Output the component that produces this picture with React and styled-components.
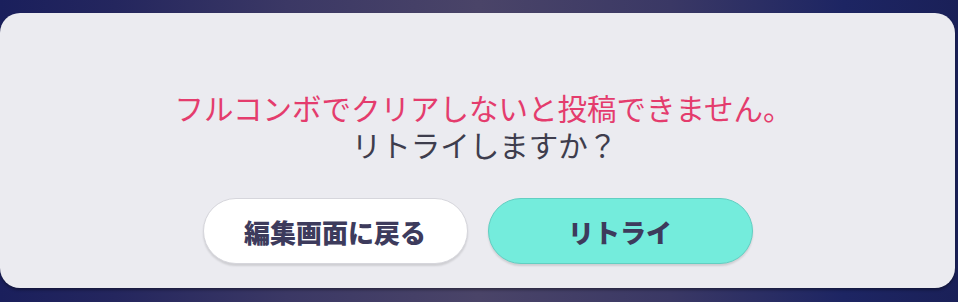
import styled, { createGlobalStyle } from "styled-components";

const GlobalStyle = createGlobalStyle`
  html, body {
    margin: 0;
    padding: 0;
  }
  body {
    width: 958px;
    height: 302px;
    overflow: hidden;
    font-family: "Noto Sans CJK JP", "Noto Sans", sans-serif;
    background: linear-gradient(
      90deg,
      #1a1f5c 0%,
      #24265e 12%,
      #3b3865 30%,
      #4a4468 50%,
      #3a3865 70%,
      #1d2563 88%,
      #1a2058 100%
    );
  }
`;

const Screen = styled.div`
  width: 958px;
  height: 302px;
  padding: 13px 3px 14px 0;
  box-sizing: border-box;
  display: flex;
`;

const Dialog = styled.div`
  flex: 1;
  background: #ebebf0;
  border-radius: 20px;
  box-shadow: 0 2px 3px rgba(0, 0, 0, 0.35);
  display: flex;
  flex-direction: column;
  align-items: center;
  padding-top: 76px;
  box-sizing: border-box;
`;

const Message = styled.div`
  text-align: center;
  font-size: 29.5px;
  line-height: 37px;
  color: #3e3d4d;
`;

const Warning = styled.div`
  color: #e43c6d;
  padding-left: 12px;
`;

const Question = styled.div`
  padding-left: 14px;
`;

const ButtonRow = styled.div`
  display: flex;
  gap: 20px;
  margin-top: 35px;
`;

const Button = styled.button`
  width: 265px;
  height: 66px;
  border-radius: 33px;
  font-family: inherit;
  font-size: 26px;
  font-weight: 900;
  color: #3d3b5c;
  cursor: pointer;
  background: ${(p) => (p.$primary ? "#74ecdc" : "#ffffff")};
  border: 1.5px solid ${(p) => (p.$primary ? "#62cfc2" : "#d6d6dc")};
  box-shadow: 0 2px 2px rgba(0, 0, 0, 0.12);
  display: flex;
  align-items: center;
  justify-content: center;
`;

export default function App() {
  return (
    <>
      <GlobalStyle />
      <Screen>
        <Dialog>
          <Message>
            <Warning>フルコンボでクリアしないと投稿できません。</Warning>
            <Question>リトライしますか？</Question>
          </Message>
          <ButtonRow>
            <Button>編集画面に戻る</Button>
            <Button $primary>リトライ</Button>
          </ButtonRow>
        </Dialog>
      </Screen>
    </>
  );
}
